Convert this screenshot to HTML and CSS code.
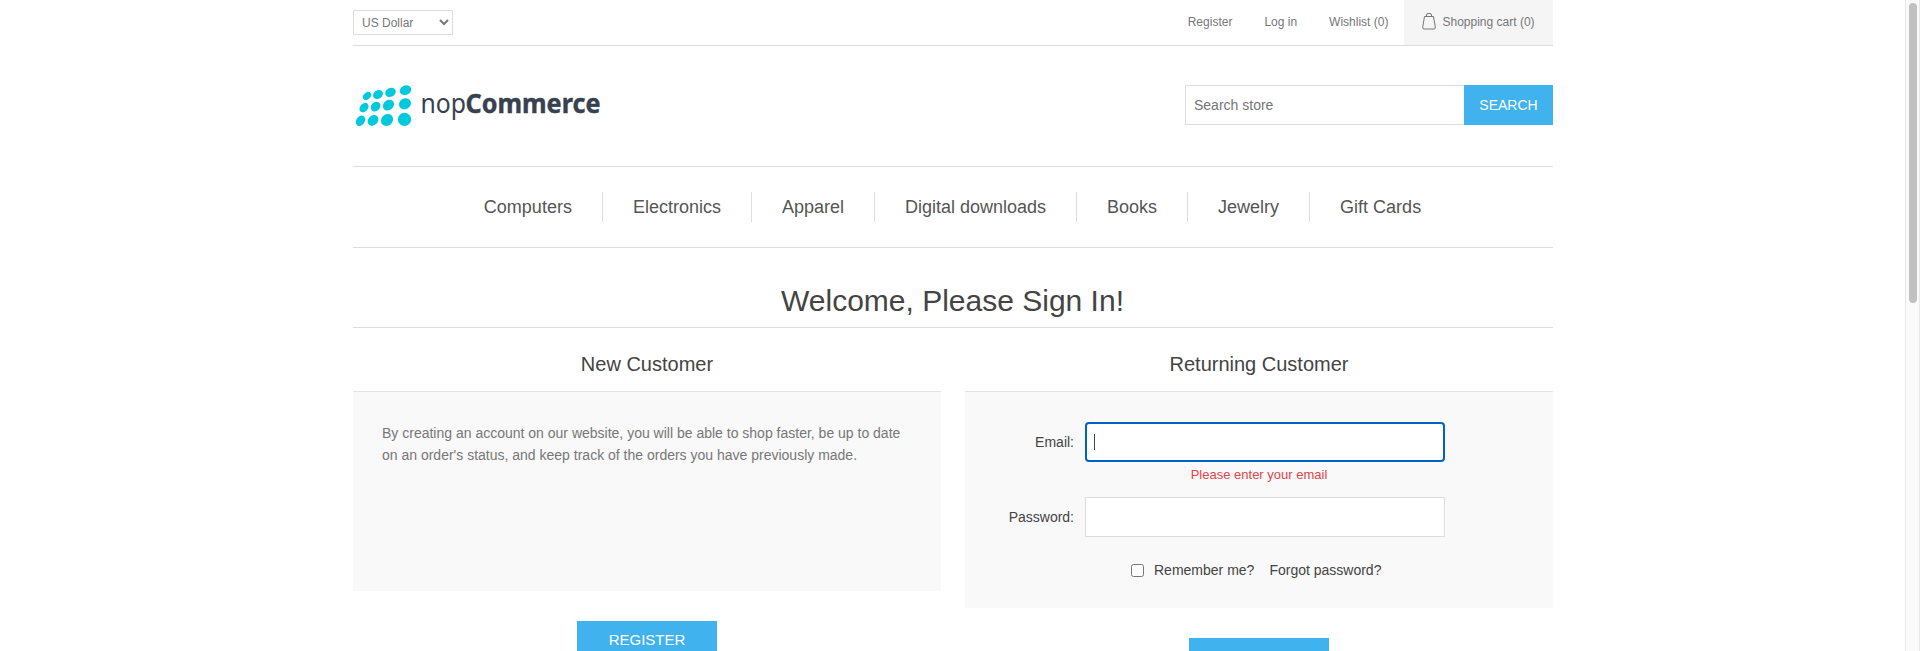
FILE: index.html
```html
<!DOCTYPE html>
<html lang="en">
<head>
<meta charset="utf-8">
<title>nopCommerce demo store. Login</title>
<link rel="stylesheet" href="styles.css">
</head>
<body>
<div class="viewport">
<div class="page">
  <header>
    <div class="header-upper">
      <select class="currency" aria-label="Currency"><option>US Dollar</option><option>Euro</option></select>
      <nav class="header-links">
        <a>Register</a><a>Log in</a><a>Wishlist (0)</a>
        <a class="cart"><svg class="bag" viewBox="0 0 14 17" width="14" height="17"><path d="M2.500 3.500h9L13.300 14q.2 2-1.300 2H2Q.5 16 .7 14ZM4.500 3.500V2Q4.500.5 6 .5h2Q9.500.5 9.500 2v1.500"/></svg>Shopping cart (0)</a>
      </nav>
    </div>
    <div class="header-lower">
      <svg class="logo" viewBox="0 0 250 50" width="250" height="50" role="img" aria-label="nopCommerce">
        <g class="dots">
          <ellipse cx="14" cy="16" rx="4.600" ry="3.400" transform="rotate(-40 14 16)"/>
          <ellipse cx="25" cy="14.500" rx="5.300" ry="4.200" transform="rotate(-35 25 14.500)"/>
          <ellipse cx="37.500" cy="12.400" rx="5.500" ry="4.400" transform="rotate(-28 37.500 12.400)"/>
          <ellipse cx="52.500" cy="10.200" rx="5.900" ry="4.700" transform="rotate(-22 52.500 10.200)"/>
          <ellipse cx="11" cy="27.600" rx="5.300" ry="3.900" transform="rotate(-48 11 27.600)"/>
          <ellipse cx="22.600" cy="26.600" rx="5.300" ry="4.300" transform="rotate(-43 22.600 26.600)"/>
          <ellipse cx="35.500" cy="25.200" rx="6" ry="4.900" transform="rotate(-38 35.500 25.200)"/>
          <ellipse cx="52" cy="23.800" rx="6.200" ry="5.300" transform="rotate(-28 52 23.800)"/>
          <ellipse cx="7.500" cy="40.800" rx="5.600" ry="4.200" transform="rotate(-55 7.500 40.800)"/>
          <ellipse cx="20" cy="40.400" rx="6" ry="4.800" transform="rotate(-48 20 40.400)"/>
          <ellipse cx="34" cy="40" rx="6.500" ry="5.600" transform="rotate(-45 34 40)"/>
          <circle cx="51.500" cy="39.400" r="6.600"/>
        </g>
        <text class="thin" x="67.500" y="32.800" textLength="45.500" lengthAdjust="spacingAndGlyphs">nop</text>
        <text class="heavy" x="112.500" y="32.800" textLength="135" lengthAdjust="spacingAndGlyphs">Commerce</text>
      </svg>
      <form class="search"><input type="text" placeholder="Search store"><button type="button">Search</button></form>
    </div>
  </header>
  <nav class="menu">
    <a>Computers</a><a>Electronics</a><a>Apparel</a><a>Digital downloads</a><a>Books</a><a>Jewelry</a><a>Gift Cards</a>
  </nav>
  <main>
    <h1>Welcome, Please Sign In!</h1>
    <div class="columns">
      <section>
        <h2>New Customer</h2>
        <div class="panel intro">By creating an account on our website, you will be able to shop faster, be up to date on an order's status, and keep track of the orders you have previously made.</div>
        <button class="action" type="button">Register</button>
      </section>
      <section>
        <h2>Returning Customer</h2>
        <div class="panel form">
          <div class="row"><label>Email:</label><div class="field focused"><span class="caret"></span></div></div>
          <div class="error">Please enter your email</div>
          <div class="row"><label>Password:</label><div class="field"></div></div>
          <div class="options"><input type="checkbox" id="remember"><label for="remember">Remember me?</label><a>Forgot password?</a></div>
        </div>
        <button class="action" type="button">Log in</button>
      </section>
    </div>
  </main>
</div>
<div class="scrollbar"><div class="thumb"></div></div>
</div>
</body>
</html>
```
FILE: styles.css
```css
* { box-sizing: border-box; }
body { margin: 0; background: #fff; font: 14px "Liberation Sans", Arial, sans-serif; color: #777; }
.viewport { display: flex; height: 651px; overflow: hidden; }
.page { flex: 1; padding: 0 352px 0 353px; }
input, button, select { font-family: inherit; margin: 0; }

.header-upper { display: flex; justify-content: space-between; height: 46px; border-bottom: 1px solid #ddd; }
.currency { width: 100px; height: 25px; margin-top: 10px; padding: 0 4px; border: 1px solid #ddd; border-radius: 0; background: #fff; color: #777; font-size: 12px; }
.header-links { display: flex; font-size: 12px; line-height: 44px; }
.header-links a { padding: 0 15.600px 0 16.400px; }
.header-links .cart { display: flex; width: 149px; padding: 0 0 0 17.500px; background: #f5f5f5; }
.bag { margin: 13px 7px 0 0; fill: none; stroke: #777; }

.header-lower { display: flex; justify-content: space-between; height: 120px; padding-top: 39px; }
.logo { margin-top: -5px; overflow: visible; }
.dots { fill: #00c9dd; }
.thin, .heavy { font-family: "Noto Sans", "Open Sans", sans-serif; font-size: 27px; fill: #37414f; }
.heavy { font-weight: 700; stroke: #37414f; stroke-width: .4px; }
.search { display: flex; height: 40px; }
.search input { width: 279px; padding: 0 8px; border: 1px solid #ddd; border-right: 0; border-radius: 0; color: #777; font-size: 14px; }
.search input::placeholder { color: #757575; }
.search button { width: 89px; padding: 0; border: 0; background: #40b2ed; color: #fff; font-size: 14px; text-transform: uppercase; }

.menu { display: flex; justify-content: center; height: 82px; padding: 25px 1px 25px 0; border: 1px solid #ddd; border-width: 1px 0; font-size: 18px; line-height: 30px; color: #555; }
.menu a { padding: 0 30px; border-left: 1px solid #ddd; }
.menu a:first-child { border-left: 0; }

h1, h2 { margin: 0; color: #444; font-weight: 400; text-align: center; }
h1 { height: 80px; padding: 35px 1px 0 0; border-bottom: 1px solid #ddd; font-size: 30px; line-height: 36px; }
.columns { display: grid; grid-template-columns: 588px 588px; justify-content: space-between; }
section { display: flex; flex-direction: column; align-items: center; }
h2 { height: 63px; font-size: 20px; line-height: 73px; }
.panel { align-self: stretch; border-top: 1px solid #e4e4e4; background: #f9f9f9; }
.intro { height: 200px; padding: 30px 30px 30px 29px; line-height: 22px; }
.form { height: 217px; padding-top: 30px; color: #444; }
.row { display: flex; align-items: center; height: 40px; }
.row label { width: 109px; margin-right: 11px; text-align: right; }
.field { width: 360px; height: 40px; border: 1px solid #ddd; background: #fff; }
.focused { padding: 10px 0 0 7px; border: 2px solid #0062c8; border-radius: 4px; }
.caret { display: block; width: 1px; height: 16px; background: #444; }
.error { height: 35px; color: #e4434b; font-size: 13px; line-height: 26px; text-align: center; }
.options { display: flex; align-items: center; height: 16px; margin: 25px 0 0 166px; }
.options input { width: 13px; height: 13px; margin-right: 10px; }
.options a { margin-left: 15px; }
.action { flex: none; width: 140px; height: 38px; margin-top: 30px; padding: 0 0 2px; border: 0; background: #40b2ed; color: #fff; font-size: 15px; text-transform: uppercase; }

.scrollbar { width: 15px; padding: 3px 0 0 3px; border: 1px solid #e8e8e8; border-width: 0 1px; background: #fafafa; }
.thumb { width: 8px; height: 300px; border-radius: 4px; background: #c1c1c1; }
```
